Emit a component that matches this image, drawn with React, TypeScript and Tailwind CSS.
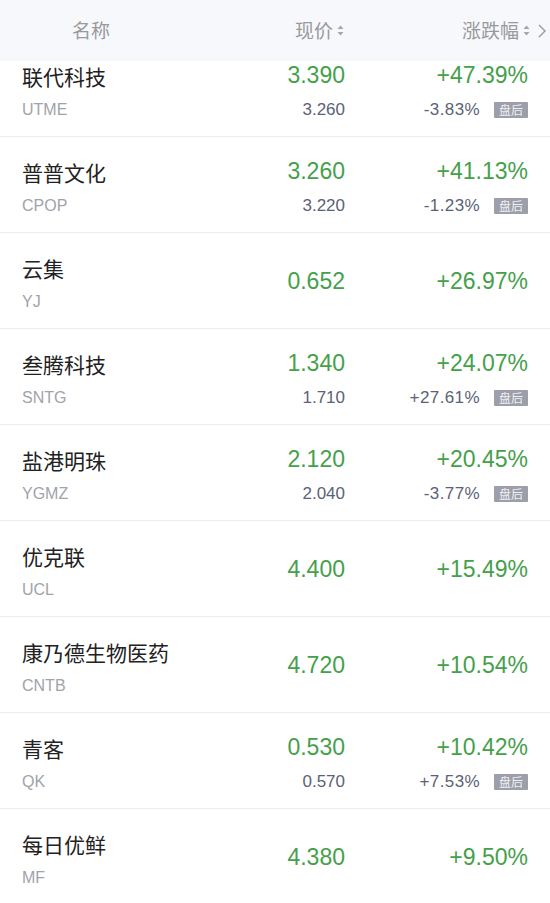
import React from 'react';

type Stock = {
  name: string;
  code: string;
  price: string;
  change: string;
  subPrice?: string;
  subChange?: string;
};

const stocks: Stock[] = [
  { name: '联代科技', code: 'UTME', price: '3.390', change: '+47.39%', subPrice: '3.260', subChange: '-3.83%' },
  { name: '普普文化', code: 'CPOP', price: '3.260', change: '+41.13%', subPrice: '3.220', subChange: '-1.23%' },
  { name: '云集', code: 'YJ', price: '0.652', change: '+26.97%' },
  { name: '叁腾科技', code: 'SNTG', price: '1.340', change: '+24.07%', subPrice: '1.710', subChange: '+27.61%' },
  { name: '盐港明珠', code: 'YGMZ', price: '2.120', change: '+20.45%', subPrice: '2.040', subChange: '-3.77%' },
  { name: '优克联', code: 'UCL', price: '4.400', change: '+15.49%' },
  { name: '康乃德生物医药', code: 'CNTB', price: '4.720', change: '+10.54%' },
  { name: '青客', code: 'QK', price: '0.530', change: '+10.42%', subPrice: '0.570', subChange: '+7.53%' },
  { name: '每日优鲜', code: 'MF', price: '4.380', change: '+9.50%' },
];

const cjk = "font-['Noto_Sans_CJK_SC',sans-serif]";
const num = "font-['Liberation_Sans','Noto_Sans_CJK_SC',sans-serif]";

function SortIcon() {
  return (
    <svg width="7" height="11" viewBox="0 0 7 11" className="ml-[4px]">
      <path d="M3.5 0.5 L6.5 4 L0.5 4 Z" fill="#a3a6ad" />
      <path d="M3.5 10.5 L6.5 7 L0.5 7 Z" fill="#a3a6ad" />
    </svg>
  );
}

function Row({ s }: { s: Stock }) {
  const hasSub = !!s.subPrice;
  return (
    <div className="flex h-[96px] border-b border-[#ededed] bg-white pl-[22px] pr-[22px]">
      <div className="flex flex-1 flex-col pt-[21px]">
        <div className={`${cjk} text-[21px] leading-[28px] text-[#222]`}>{s.name}</div>
        <div className={`${num} mt-[9px] text-[16px] leading-[22px] text-[#a0a3ab]`}>{s.code}</div>
      </div>
      <div
        className={`flex w-[140px] flex-col items-end ${hasSub ? 'pt-[19px]' : 'justify-center'}`}
      >
        <div className={`${num} text-[23px] leading-[30px] text-[#45a04b]`}>{s.price}</div>
        {hasSub && (
          <div className={`${num} mt-[9px] text-[17px] leading-[22px] text-[#5b6275]`}>{s.subPrice}</div>
        )}
      </div>
      <div
        className={`flex w-[183px] flex-col items-end ${hasSub ? 'pt-[19px]' : 'justify-center'}`}
      >
        <div className={`${num} text-[23px] leading-[30px] text-[#45a04b]`}>{s.change}</div>
        {hasSub && (
          <div className="mt-[9px] flex h-[22px] items-center">
            <span className={`${num} text-[17px] leading-[22px] tracking-[0.4px] text-[#5b6275]`}>
              {s.subChange}
            </span>
            <span
              className={`${cjk} ml-[14px] flex h-[16px] w-[34px] items-center justify-center rounded-[1px] bg-[#9c9fa9] text-[12px] leading-none text-[#eef0f4]`}
            >
              盘后
            </span>
          </div>
        )}
      </div>
    </div>
  );
}

export default function App() {
  return (
    <div className="flex h-[903px] w-[550px] flex-col overflow-hidden bg-white">
      <div className={`${cjk} flex h-[61px] shrink-0 items-center bg-[#f6f8fc] pl-[22px] text-[19px] text-[#9a9a9a]`}>
        <div className="flex-1 pl-[50px]">名称</div>
        <div className="flex w-[141px] items-center justify-end pr-[2px]">
          <span>现价</span>
          <SortIcon />
        </div>
        <div className="flex w-[184px] items-center justify-end">
          <span>涨跌幅</span>
          <SortIcon />
        </div>
        <div className="flex w-[20px] items-center justify-end pr-[3px]">
          <svg width="10" height="16" viewBox="0 0 10 16">
            <path d="M2 2 L8 8 L2 14" fill="none" stroke="#9a9a9a" strokeWidth="1.4" />
          </svg>
        </div>
      </div>
      <div className="flex-1 overflow-hidden">
        <div className="-mt-[20px]">
          {stocks.map((s) => (
            <Row key={s.code} s={s} />
          ))}
        </div>
      </div>
    </div>
  );
}
